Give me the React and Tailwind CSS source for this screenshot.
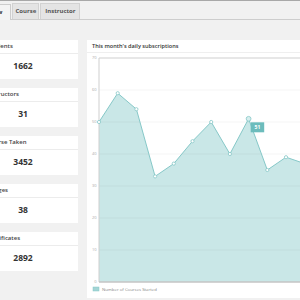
const stats = [
  { title: 'Total Students', value: '1662' },
  { title: 'Total Instructors', value: '31' },
  { title: 'Total Course Taken', value: '3452' },
  { title: 'Total Badges', value: '38' },
  { title: 'Total Certificates', value: '2892' },
];

const data = [50, 59, 54, 33, 37, 44, 50, 40, 51, 35, 39, 37, 42];

function StatCard({ title, value }) {
  return (
    <div className="h-[39px] bg-white flex flex-col">
      <div className="h-[14px] border-b border-[#ececec] pl-[11px] flex items-center text-[6px] font-semibold text-[#444]">
        {title}
      </div>
      <div className="flex-1 flex items-center justify-center pl-[8px] text-[8.5px] font-bold text-[#333]">
        {value}
      </div>
    </div>
  );
}

function Chart() {
  const x = (i) => 12 + i * 18.7;
  const y = (v) => 229 - v * 3.2;
  const line = data.map((v, i) => `${x(i)},${y(v)}`).join(' ');
  const area = `12,229 ${line} ${x(data.length - 1)},229`;
  const ticks = [0, 10, 20, 30, 40, 50, 60, 70];

  return (
    <svg width="213" height="245" className="block">
      <polygon points={area} fill="#c9e7e7" />
      {ticks.slice(1, 7).map((t) => (
        <line key={t} x1="12" x2="213" y1={y(t)} y2={y(t)} stroke="#000" strokeOpacity="0.05" strokeWidth="0.8" />
      ))}
      <polyline points={line} fill="none" stroke="#86c8c8" strokeWidth="1" />
      <line x1="12" x2="12" y1="5" y2="229" stroke="#cfcfcf" strokeWidth="1" />
      <line x1="12" x2="213" y1="5" y2="5" stroke="#cfcfcf" strokeWidth="1" />
      <line x1="12" x2="213" y1="229" y2="229" stroke="#c4c4c4" strokeWidth="1.5" />
      {ticks.map((t) => (
        <text key={t} x="9.5" y={y(t) + 1.4} textAnchor="end" fontSize="4" fill="#aaa">
          {t}
        </text>
      ))}
      {data.map((v, i) => (
        <circle
          key={i}
          cx={x(i)}
          cy={y(v)}
          r={i === 8 ? 2.4 : 1.6}
          fill={i === 8 ? '#d6eeee' : '#fff'}
          stroke="#86c8c8"
          strokeWidth="0.8"
        />
      ))}
      <rect x="163.7" y="69.3" width="13.5" height="10" fill="#6cbcbc" />
      <text x="170.4" y="76.2" textAnchor="middle" fontSize="5" fontWeight="700" fill="#fff">
        51
      </text>
      <rect x="6" y="234" width="6" height="4" fill="#a3d5d5" stroke="#86c8c8" strokeWidth="0.5" />
      <text x="15" y="237.6" fontSize="4.3" fill="#888">
        Number of Courses Started
      </text>
    </svg>
  );
}

export default function App() {
  return (
    <div className="w-[300px] h-[300px] overflow-hidden bg-[#f1f1f1] border-t border-[#a8a8a8] font-['Open_Sans',sans-serif]">
      <div className="w-[360px] -ml-[40px]">
        <div className="h-[19px] flex items-end pl-[6px] border-b border-[#cdcdcd]">
          <div className="h-[16px] -mb-px pl-[7px] pr-[8px] flex items-center bg-[#f4f4f4] border border-b-0 border-[#cdcdcd] text-[6px] font-bold text-[#333]">
            Overview
          </div>
          <div className="h-[16px] w-[27px] ml-[1px] flex items-center justify-center bg-[#e4e4e4] border border-[#d2d2d2] border-b-0 text-[6px] font-bold text-[#555]">
            Course
          </div>
          <div className="h-[16px] w-[40px] ml-[1px] flex items-center justify-center bg-[#e4e4e4] border border-[#d2d2d2] border-b-0 text-[6px] font-bold text-[#555]">
            Instructor
          </div>
        </div>
        <div className="flex gap-[9px] pt-[20px]">
          <div className="w-[118px] flex flex-col gap-[9px]">
            {stats.map((s) => (
              <StatCard key={s.title} {...s} />
            ))}
          </div>
          <div className="flex-1 h-[258px] bg-white">
            <div className="h-[13px] pl-[5px] flex items-center border-b border-[#efefef] text-[5.6px] font-semibold text-[#333]">
              This month's daily subscriptions
            </div>
            <Chart />
          </div>
        </div>
      </div>
    </div>
  );
}
